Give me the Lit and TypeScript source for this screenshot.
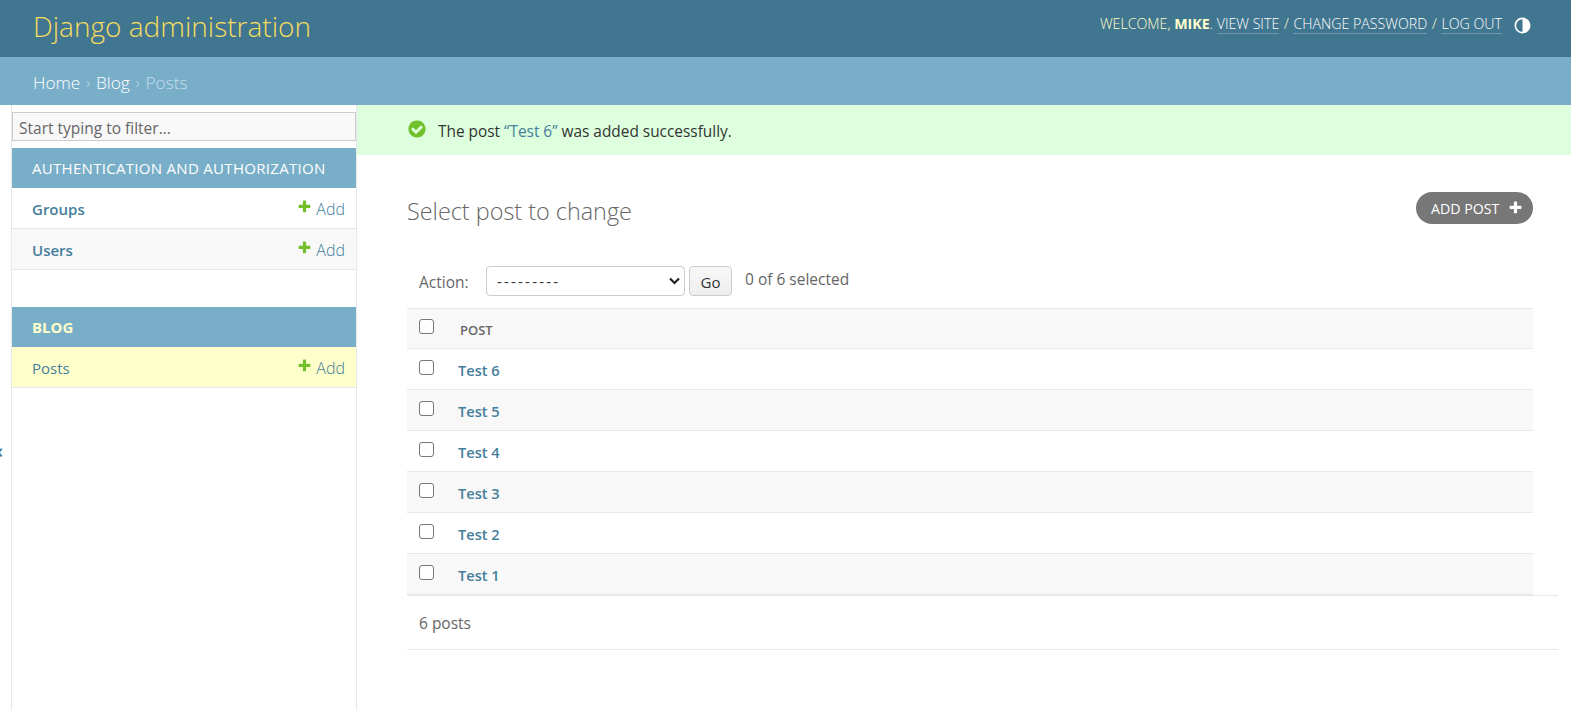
import { LitElement, html, css, svg } from "lit";
import { customElement } from "lit/decorators.js";

const PLUS = "M1600 796v192q0 40-28 68t-68 28h-416v416q0 40-28 68t-68 28h-192q-40 0-68-28t-28-68v-416h-416q-40 0-68-28t-28-68v-192q0-40 28-68t68-28h416v-416q0-40 28-68t68-28h192q40 0 68 28t28 68v416h416q40 0 68 28t28 68z";
const YES = "M1412 734q0-28-18-46l-91-90q-19-19-45-19t-45 19l-408 407-226-226q-19-19-45-19t-45 19l-91 90q-18 18-18 46 0 27 18 45l362 362q19 19 45 19 27 0 46-19l543-543q18-18 18-45zm252 162q0 209-103 385.5t-279.5 279.5-385.5 103-385.5-103-279.5-279.5-103-385.5 103-385.5 279.5-279.5 385.5-103 385.5 103 279.5 279.5 103 385.5z";

const plus = (cls: string) => html`<svg class=${cls} viewBox="0 0 1792 1792">${svg`<path d=${PLUS}></path>`}</svg>`;

@customElement("app-root")
export class AppRoot extends LitElement {
  static styles = css`
    :host { display: block; height: 710px; overflow: hidden; font-family: "Open Sans", "Noto Sans", sans-serif; font-size: 15px; color: #333; background: #fff; }
    * { box-sizing: border-box; }
    a { text-decoration: none; color: #447e9b; }
    .header { height: 57px; background: #417690; color: #ffc; display: flex; justify-content: space-between; padding: 0 39px 0 33px; }
    .brand { font-size: 28px; font-weight: 300; color: #f5dd5d; line-height: 53px; }
    .tools { display: flex; align-items: flex-start; padding-top: 15px; font-size: 14.2px; line-height: 18px; font-weight: 300; }
    .tools strong { font-weight: 700; }
    .tools a { color: #fff; border-bottom: 1px solid rgba(255,255,255,.25); line-height: 18px; height: 19px; }
    .tools .t { white-space: pre; }
    .sl { padding: 0 1px; }
    .theme { width: 19px; height: 19px; margin: 1px 0 0 11px; fill: #fff; }
    .crumbs { height: 48px; background: #79aec8; color: #c4dce8; display: flex; align-items: center; padding: 2px 33px 0; font-size: 17.3px; font-weight: 300; white-space: pre; }
    .crumbs a { color: #fff; }
    .sep { font-size: 15px; padding: 0 2px; }
    .body { display: flex; height: 605px; }
    .toggle { width: 11px; flex: none; position: relative; overflow: hidden; color: #447e9b; font-size: 20px; font-weight: 600; }
    .toggle span { position: absolute; left: -8px; top: 332px; }
    .side { width: 346px; flex: none; border-left: 1px solid #e8e8e8; border-right: 1px solid #e8e8e8; padding-top: 7px; display: flex; flex-direction: column; }
    .filter { height: 29px; margin-bottom: 7px; border: 1px solid #ccc; background: #f8f8f8; color: #666; font-size: 15.5px; padding: 2px 6px 0; display: flex; align-items: center; }
    .cap { height: 40px; background: #79aec8; color: #fff; font-size: 15px; letter-spacing: .3px; padding: 0 20px; display: flex; align-items: center; }
    .cap.cur { color: #ffc; font-weight: 700; letter-spacing: 0; }
    .row { height: 41px; border-bottom: 1px solid #e8e8e8; padding: 2px 11px 0 20px; display: flex; justify-content: space-between; align-items: center; font-size: 15px; }
    .row b { font-weight: 600; color: #447e9b; }
    .row.alt { background: #f8f8f8; }
    .row.cur { background: #ffc; }
    .row.cur b { font-weight: 500; }
    .add { display: flex; align-items: center; font-size: 16px; font-weight: 300; color: #447e9b; }
    .p { width: 15px; height: 15px; fill: #70bf2b; margin: -6px 4px 0 0; }
    .gap { height: 37px; }
    .main { flex: 1; min-width: 0; display: flex; flex-direction: column; }
    .msg { height: 50px; background: #dfd; display: flex; align-items: center; padding: 3px 0 0 50px; font-size: 15.4px; }
    .msg svg { width: 20px; height: 20px; fill: #70bf2b; margin-right: 11px; margin-top: -5px; }
    .msg a { font-weight: 400; }
    .content { padding: 37px 13px 0 50px; }
    .titlebar { display: flex; justify-content: space-between; padding-right: 25px; align-items: flex-start; height: 74px; }
    h1 { margin: 0; font-size: 23.4px; font-weight: 300; color: #666; line-height: 38px; }
    .btn { width: 117px; height: 32px; border-radius: 16px; background: #777; color: #fff; display: flex; align-items: center; padding-left: 15px; font-size: 14.2px; font-weight: 400; }
    .btn svg { width: 15px; height: 15px; fill: #fff; margin-left: 9px; margin-top: -2px; }
    .actions { height: 42px; display: flex; align-items: flex-start; padding-left: 12px; color: #666; margin-right: 25px; }
    .actions label { font-size: 15.5px; margin-top: 5px; width: 67px; }
    .selwrap { position: relative; width: 199px; height: 30px; }
    .sel { appearance: none; width: 199px; height: 30px; border: 1px solid #ccc; border-radius: 4px; background: #fff; color: #333; font: inherit; font-size: 15px; letter-spacing: 2.2px; padding-left: 10px; }
    .chev { position: absolute; right: 5px; top: 11px; width: 11px; height: 8px; fill: none; stroke: #222; stroke-width: 2.2; pointer-events: none; }
    .go { width: 43px; height: 30px; margin-left: 4px; border: 1px solid #ccc; border-radius: 4px; background: linear-gradient(#f8f8f8, #eee); color: #333; font: inherit; font-size: 15px; padding: 1px 0 0; }
    .count { font-size: 15.5px; margin-left: 13px; margin-top: 2px; }
    .table { margin-right: 25px; border-top: 1px solid #e8e8e8; }
    .tr { height: 41px; border-bottom: 1px solid #e8e8e8; display: flex; align-items: flex-start; padding-left: 12px; }
    .tr.odd { background: #f8f8f8; }
    .tr.head { height: 40px; background: #f8f8f8; }
    input[type="checkbox"] { appearance: none; width: 15px; height: 15px; margin: 11px 0 0 0; border: 1px solid #767676; border-radius: 3px; background: #fff; flex: none; }
    .head input[type="checkbox"] { margin-top: 10px; }
    .tr a { font-weight: 600; font-size: 14.6px; margin: 11px 0 0 24px; }
    .tr span { font-weight: 600; font-size: 13px; color: #666; margin: 12px 0 0 26px; }
    .pager { height: 55px; border-top: 1px solid #e8e8e8; border-bottom: 1px solid #e8e8e8; display: flex; align-items: center; padding-left: 12px; color: #666; font-size: 15.5px; }
  `;

  private posts = [6, 5, 4, 3, 2, 1];

  render() {
    return html`
      <div class="header">
        <div class="brand">Django administration</div>
        <div class="tools">
          <span class="t">WELCOME, <strong>MIKE</strong>. </span>
          <a href="#">VIEW SITE</a><span class="t sl"> / </span>
          <a href="#">CHANGE PASSWORD</a><span class="t sl"> / </span>
          <a href="#">LOG OUT</a>
          <svg class="theme" viewBox="0 0 24 24"><path d="M12 22C6.477 22 2 17.523 2 12S6.477 2 12 2s10 4.477 10 10-4.477 10-10 10zm0-2V4a8 8 0 1 0 0 16z"></path></svg>
        </div>
      </div>
      <div class="crumbs"><a href="#">Home</a><span class="sep"> › </span><a href="#">Blog</a><span class="sep"> › </span>Posts</div>
      <div class="body">
        <div class="toggle"><span>«</span></div>
        <nav class="side">
          <div class="filter">Start typing to filter...</div>
          <div class="cap">AUTHENTICATION AND AUTHORIZATION</div>
          <div class="row"><b>Groups</b><span class="add">${plus("p")}Add</span></div>
          <div class="row alt"><b>Users</b><span class="add">${plus("p")}Add</span></div>
          <div class="gap"></div>
          <div class="cap cur">BLOG</div>
          <div class="row cur"><b>Posts</b><span class="add">${plus("p")}Add</span></div>
        </nav>
        <main class="main">
          <div class="msg">
            <svg viewBox="0 0 1792 1792"><path d=${YES}></path></svg>
            <span>The post <a href="#">“Test 6”</a> was added successfully.</span>
          </div>
          <div class="content">
            <div class="titlebar">
              <h1>Select post to change</h1>
              <a class="btn" href="#">ADD POST${plus("")}</a>
            </div>
            <div class="actions">
              <label>Action:</label>
              <div class="selwrap">
                <select class="sel"><option>---------</option></select>
                <svg class="chev" viewBox="0 0 11 8"><polyline points="1,1.5 5.5,6 10,1.5"></polyline></svg>
              </div>
              <button class="go">Go</button>
              <span class="count">0 of 6 selected</span>
            </div>
            <div class="table">
              <div class="tr head"><input type="checkbox" /><span>POST</span></div>
              ${this.posts.map((n, i) => html`<div class="tr ${i % 2 ? "odd" : ""}"><input type="checkbox" /><a href="#">Test ${n}</a></div>`)}
            </div>
            <div class="pager">6 posts</div>
          </div>
        </main>
      </div>
    `;
  }
}
